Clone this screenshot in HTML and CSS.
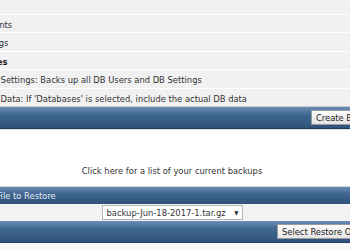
FILE: index.html
```html
<!DOCTYPE html>
<html lang="en">
<head>
    <meta charset="UTF-8">
    <title>Create/Restore Backups</title>
    <link rel="stylesheet" href="styles.css">
</head>
<body>
<div class="page">
    <div class="opts">
        <div class="row head">Ftp</div>
        <div class="row">Ftp Accounts</div>
        <div class="row">Ftp Settings</div>
        <div class="row head">Databases</div>
        <div class="row">Database Settings: Backs up all DB Users and DB Settings</div>
        <div class="row">Database Data: If 'Databases' is selected, include the actual DB data</div>
    </div>
    <div class="bar">
        <button class="btn">Create Backup</button>
    </div>
    <div class="list_link">
        <a href="#">Click here for a list of your current backups</a>
    </div>
    <div class="title_bar">Select File to Restore</div>
    <div class="pick">
        <div class="select">
            <span>backup-Jun-18-2017-1.tar.gz</span>
            <span class="arrow">&#9660;</span>
        </div>
    </div>
    <div class="bar">
        <button class="btn">Select Restore Options</button>
    </div>
    <div class="foot"></div>
</div>
</body>
</html>
```

FILE: styles.css
```css
*{margin: 0;padding: 0}
body{
    overflow: hidden;
    background: #fff;
    font-family: "DejaVu Sans Condensed", "DejaVu Sans", sans-serif;
    font-size: 9.3px;
    color: #333;
}
.page{
    width: 440px;
    margin-left: -48px;
    margin-top: -3.4px;
}
    .row{
        height: 17.4px;
        line-height: 20px;
        padding-left: 6px;
        background: #f1f1f1;
        border-bottom: 1px solid #fff;
        white-space: nowrap;
    }
    .row:last-child{
        border-bottom-color: #c9c9c9;
    }
    .head{
        font-weight: bold;
        color: #222;
    }
    .bar{
        height: 21px;
        display: flex;
        align-items: center;
        justify-content: flex-end;
        padding-right: 10px;
        background: linear-gradient(#6a8db2, #3f6690 40%, #2d527b);
        border-bottom: 1px solid #1f3c5e;
    }
        .btn{
            height: 15px;
            padding: 0 4px;
            font-family: inherit;
            font-size: 9.3px;
            color: #222;
            background: linear-gradient(#fdfdfd, #e4e4e4);
            border: 1px solid #9a9a9a;
        }
    .list_link{
        height: 58px;
        box-sizing: border-box;
        padding-top: 35px;
        text-align: center;
        border-top: 1px solid #e2e2e2;
        border-bottom: 1px solid #d6d6d6;
    }
        .list_link a{
            color: #333;
            text-decoration: none;
        }
    .title_bar{
        height: 17px;
        line-height: 17px;
        padding-left: 16px;
        color: #e4ebf3;
        background: linear-gradient(#6a8db2, #3f6690 40%, #2d527b);
    }
    .pick{
        height: 17px;
        display: flex;
        align-items: center;
        justify-content: center;
        background: #f3f3f3;
    }
        .select{
            width: 141px;
            height: 15px;
            box-sizing: border-box;
            display: flex;
            align-items: center;
            justify-content: space-between;
            padding: 0 3px 0 4px;
            background: #fff;
            border: 1px solid #b5b5b5;
        }
        .arrow{
            font-size: 6px;
        }
    .foot{
        height: 10px;
        background: #f7f7f7;
    }
```
